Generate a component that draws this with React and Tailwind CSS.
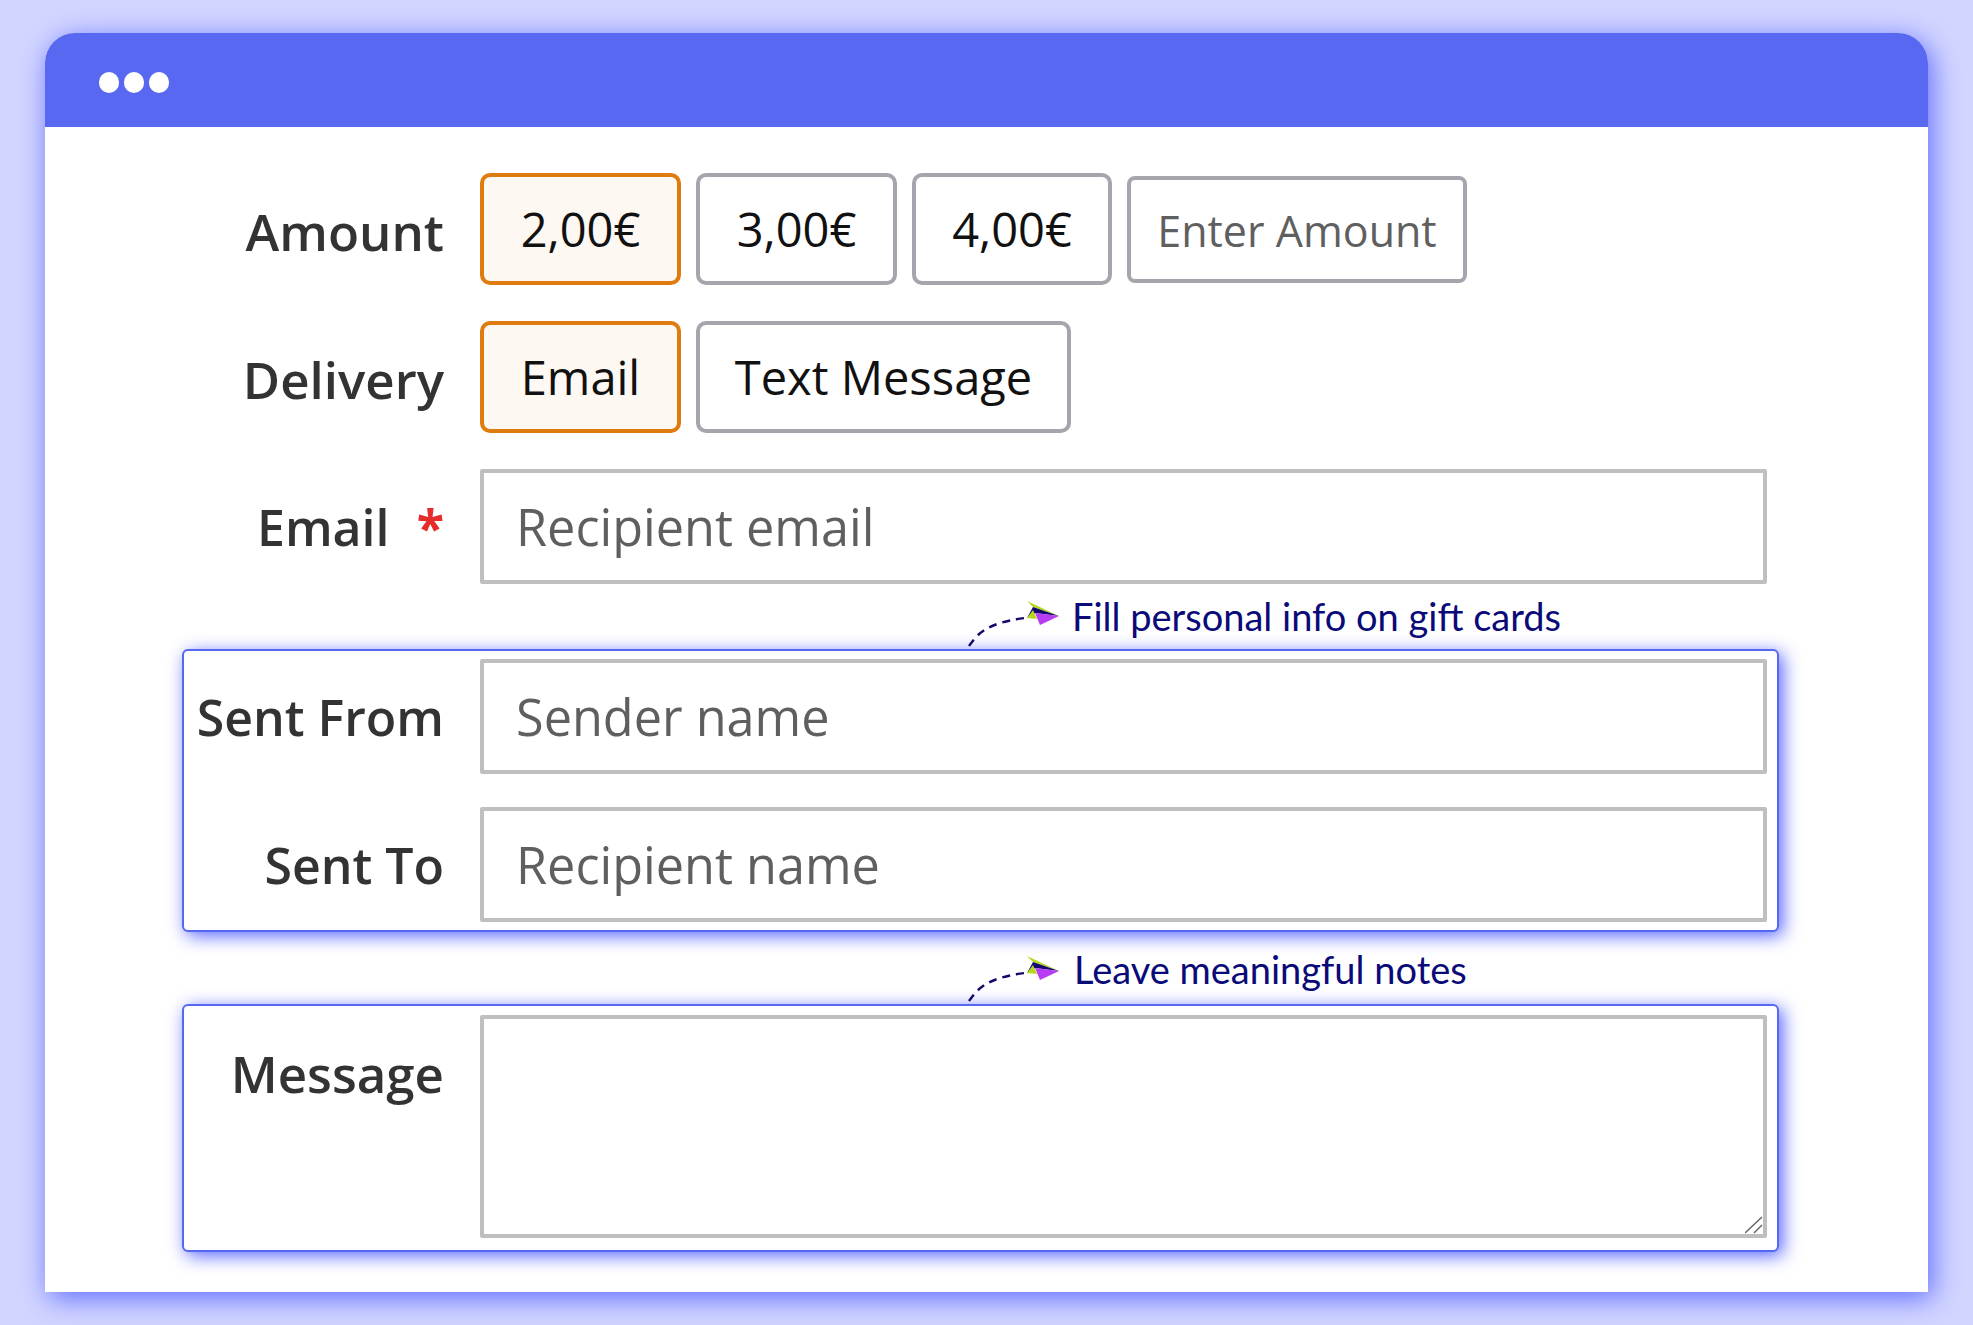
import React from "react";

const sans = "font-['Open_Sans',sans-serif]";

const Label = ({ children, className = "", size = "text-[51px]" }) => (
  <div className={`w-[298px] shrink-0 whitespace-nowrap pr-[36px] text-right font-semibold leading-[64px] text-[#333333] ${size} ${className}`}>{children}</div>
);

const Choice = ({ children, active, width }) => (
  <div
    className={`flex h-[112px] items-center justify-center rounded-[10px] border-[4px] text-[47px] text-[#111111] ${width} ${
      active ? "border-[#e07b10] bg-[#fdf8f1]" : "border-[#a5a6ad] bg-white"
    }`}
  >
    {children}
  </div>
);

const Field = ({ placeholder }) => (
  <div className="flex h-[115px] flex-1 items-center rounded-[2px] border-[4px] border-[#bfbfbf] pl-[32px] text-[50.4px] text-[#5f5f5f]">{placeholder}</div>
);

const Note = ({ children, className = "", textClass = "" }) => (
  <div className={`flex items-end pl-[783px] ${className}`}>
    <svg width="96" height="62" viewBox="0 0 96 62" className="shrink-0">
      <path d="M4 59 C12 48 20 36 60 31" fill="none" stroke="#14086e" strokeWidth="2.5" strokeDasharray="8 6" />
      <path d="M62 14 L94 29 L68 20 Z" fill="#b5d81c" />
      <path d="M62 31 L68 20 L94 29 L70 26 Z" fill="#14086e" />
      <path d="M62 31 L68 23 L72 32 Z" fill="#b5d81c" />
      <path d="M70 26 L94 29 L75 38 Z" fill="#b93cf5" />
    </svg>
    <div className={`font-['Lato',sans-serif] text-[38px] leading-[50px] text-[#0a0a78] ${textClass}`}>{children}</div>
  </div>
);

export default function App() {
  return (
    <div className={`h-[1325px] overflow-hidden bg-[#d2d5ff] px-[45px] pt-[33px] ${sans}`}>
      <div className="h-[1259px] overflow-hidden rounded-t-[30px] bg-white shadow-[4px_6px_28px_#5f6cff]">
        <div className="flex h-[94px] items-center gap-[5px] bg-[#5868f0] pl-[54px] pt-[5px]">
          <span className="h-[21px] w-[20px] rounded-full bg-white"></span>
          <span className="h-[21px] w-[20px] rounded-full bg-white"></span>
          <span className="h-[21px] w-[20px] rounded-full bg-white"></span>
        </div>

        <div className="pl-[137px] pr-[161px] pt-[46px]">
          <div className="flex items-start">
            <Label className="pt-[26px]">Amount</Label>
            <div className="flex gap-[15px]">
              <Choice active width="w-[201px]">2,00€</Choice>
              <Choice width="w-[201px]">3,00€</Choice>
              <Choice width="w-[200px]">4,00€</Choice>
              <div className="mt-[3px] flex h-[107px] w-[340px] items-center justify-center rounded-[8px] border-[4px] border-[#a5a6ad] pt-[3px] text-[43px] text-[#5f5f5f]">Enter Amount</div>
            </div>
          </div>

          <div className="mt-[36px] flex items-start">
            <Label className="pt-[26px]">Delivery</Label>
            <div className="flex gap-[15px]">
              <Choice active width="w-[201px]">Email</Choice>
              <Choice width="w-[375px]">Text Message</Choice>
            </div>
          </div>

          <div className="mt-[36px] flex items-center">
            <div className="flex w-[298px] shrink-0 justify-between pl-[75px] pr-[36px] text-[50px] font-semibold leading-[64px] text-[#333333]">
              <span>Email</span>
              <span className="font-bold text-[#e62b2b]">*</span>
            </div>
            <Field placeholder="Recipient email" />
          </div>

          <Note className="mt-[3px]" textClass="pb-[8px] pl-[11px]">Fill personal info on gift cards</Note>

          <div className="-mr-[12px] rounded-[6px] border-2 border-[#5667f2] bg-white pb-[8px] pr-[10px] pt-[8px] shadow-[4px_4px_18px_#5a68ff]">
            <div className="flex items-center">
              <Label className="-ml-[2px]" size="text-[50px]">Sent From</Label>
              <Field placeholder="Sender name" />
            </div>
            <div className="mt-[33px] flex items-center">
              <Label className="-ml-[2px]" size="text-[50px]">Sent To</Label>
              <Field placeholder="Recipient name" />
            </div>
          </div>

          <Note className="mt-[10px]" textClass="pb-[10px] pl-[13px]">Leave meaningful notes</Note>

          <div className="-mr-[12px] flex items-start rounded-[6px] border-2 border-[#5667f2] bg-white pb-[12px] pr-[10px] pt-[9px] shadow-[4px_4px_18px_#5a68ff]">
            <Label className="-ml-[2px] pt-[26px]">Message</Label>
            <div className="relative h-[223px] flex-1 rounded-[2px] border-[4px] border-[#bfbfbf]">
              <svg width="18" height="18" viewBox="0 0 18 18" className="absolute bottom-0 right-0">
                <path d="M0 17 L17 1 M9 17 L17 9" stroke="#666666" strokeWidth="1.5" />
              </svg>
            </div>
          </div>
        </div>
      </div>
    </div>
  );
}
